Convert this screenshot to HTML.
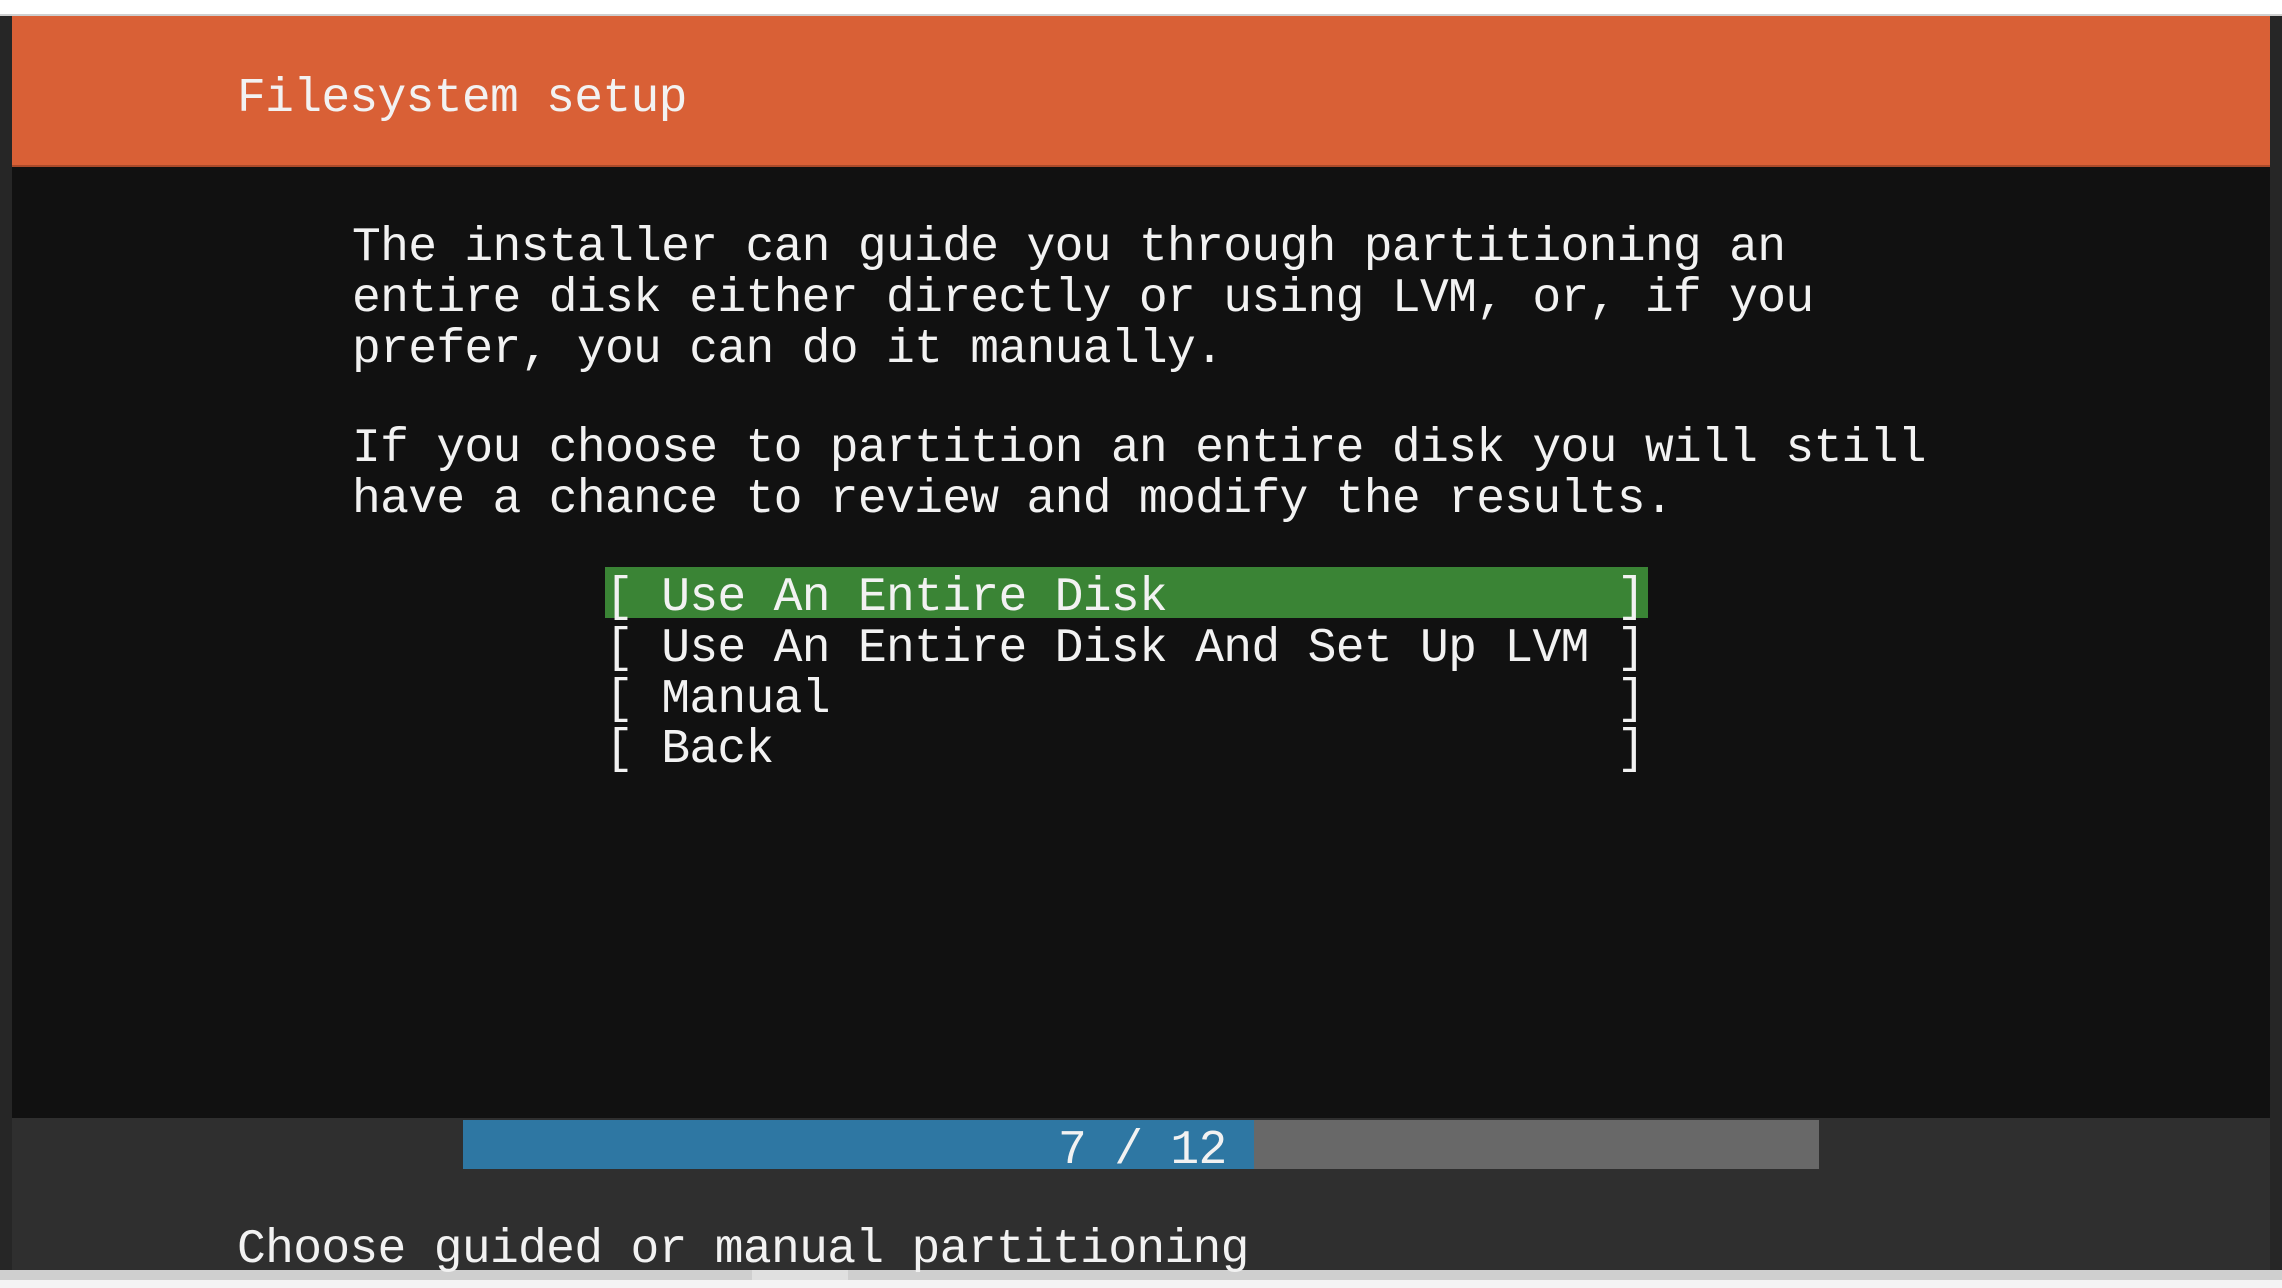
<!DOCTYPE html>
<html><head><meta charset="utf-8"><style>
html,body{margin:0;padding:0;}
body{width:2282px;height:1288px;position:relative;overflow:hidden;background:#111;font-family:"Liberation Mono","DejaVu Sans Mono",monospace;}
.a{position:absolute;}
.t{position:absolute;font-size:48px;letter-spacing:-0.7px;line-height:50.5px;color:#f2f2f2;white-space:pre;}
</style></head><body>
<div class="a" style="left:0;top:0;width:2282px;height:14px;background:#fff"></div>
<div class="a" style="left:0;top:14px;width:2282px;height:2px;background:#cfcfcf"></div>
<div class="a" style="left:0;top:16px;width:12px;height:1254px;background:#262626"></div>
<div class="a" style="left:2270px;top:16px;width:12px;height:1254px;background:#262626"></div>
<div class="a" style="left:12px;top:16px;width:2258px;height:149px;background:#d96036"></div>
<div class="a" style="left:12px;top:165px;width:2258px;height:2px;background:#a94a2a"></div>
<div class="a" style="left:12px;top:1118px;width:2258px;height:152px;background:#2f2f2f"></div>
<div class="a" style="left:463px;top:1120px;width:791px;height:49px;background:#2e77a3"></div>
<div class="a" style="left:1254px;top:1120px;width:565px;height:49px;background:#686868"></div>
<div class="a" style="left:0;top:1270px;width:2282px;height:10px;background:#cfcfcf"></div>
<div class="a" style="left:0;top:1280px;width:2282px;height:8px;background:#f4f4f4"></div>
<div class="a" style="left:752px;top:1270px;width:96px;height:10px;background:#e0e0e0"></div>
<div class="a" style="left:605px;top:567px;width:1043px;height:51px;background:#3a8435"></div>

<div class="t" style="left:237px;top:74px">Filesystem setup</div>
<div class="t" style="left:352px;top:223px">The installer can guide you through partitioning an</div>
<div class="t" style="left:352px;top:274px">entire disk either directly or using LVM, or, if you</div>
<div class="t" style="left:352px;top:325px">prefer, you can do it manually.</div>
<div class="t" style="left:352px;top:424px">If you choose to partition an entire disk you will still</div>
<div class="t" style="left:352px;top:475px">have a chance to review and modify the results.</div>
<div class="t" style="left:605px;top:573px">[ Use An Entire Disk                ]</div>
<div class="t" style="left:605px;top:624px">[ Use An Entire Disk And Set Up LVM ]</div>
<div class="t" style="left:605px;top:675px">[ Manual                            ]</div>
<div class="t" style="left:605px;top:725px">[ Back                              ]</div>
<div class="t" style="left:1058px;top:1126px">7 / 12</div>
<div class="t" style="left:237px;top:1225px">Choose guided or manual partitioning</div>
</body></html>
